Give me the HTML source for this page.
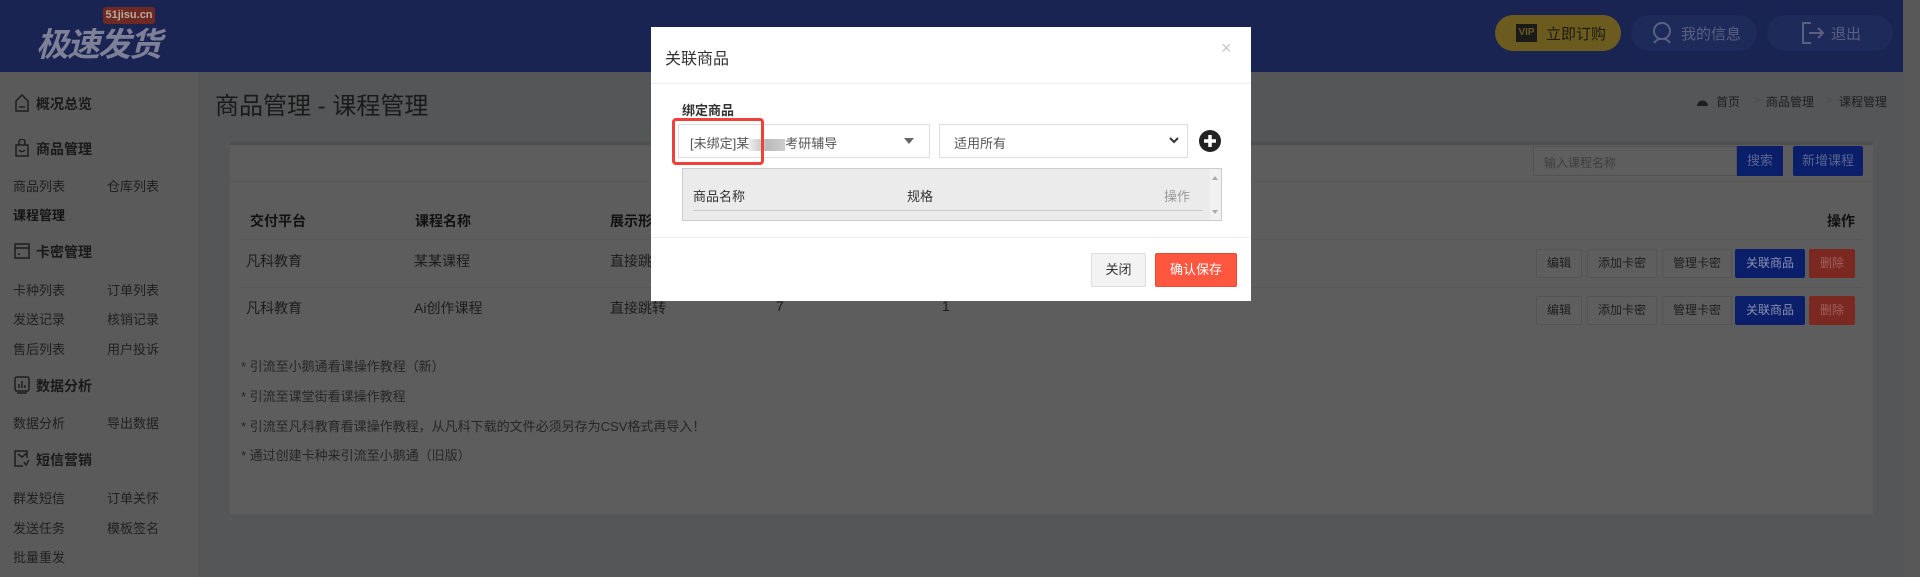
<!DOCTYPE html>
<html><head><meta charset="utf-8"><style>
*{margin:0;padding:0;box-sizing:border-box}
body{width:1920px;height:577px;overflow:hidden;background:#555657;font-family:"Liberation Sans","Noto Sans CJK SC",sans-serif;position:relative;color:#1e1e1e}
.a{position:absolute;white-space:nowrap}
.hdr{left:0;top:0;width:1903px;height:72px;background:#1a2452}
.sb{left:0;top:72px;width:200px;height:505px;background:#5a5a5a;border-right:1px solid #505050}
.sbi{font-size:13px;color:#202020}
.sbh{font-size:14px;font-weight:bold;color:#1a1a1a}
.panel{left:230px;top:142px;width:1643px;height:372px;background:#5d5d5d;border-top:3px solid #4f4f4f}
.th{font-size:14px;font-weight:bold;color:#111}
.td{font-size:14px;color:#1c1c1c}
.btn{height:29px;line-height:27px;font-size:12px;text-align:center;border:1px solid #545454;border-radius:2px;background:#5e5e5e;color:#1e1e1e}
.bb{background:#0a1e6a;border-color:#0a1e6a;color:#8a90b0}
.br{background:#7a2820;border-color:#7a2820;color:#a06060}
.note{font-size:13px;color:#262626}
.modal{left:651px;top:27px;width:600px;height:274px;background:#fff}
.bc{font-size:12px;color:#1e1e1e;top:93px}
</style></head><body>
<div class="a hdr"></div>
<div class="a" style="left:1903px;top:0;width:17px;height:577px;background:#575757"></div>
<div class="a" style="left:103px;top:7px;width:52px;height:17px;background:#6e2a22;border-radius:3px;color:#b8a8a0;font-size:11px;font-weight:bold;text-align:center;line-height:17px">51jisu.cn</div>
<div class="a" style="left:36px;top:18px;font-size:33px;font-weight:bold;font-style:italic;color:#7d8096;letter-spacing:-2px">极速发货</div>
<div class="a" style="left:1495px;top:15px;width:126px;height:36px;border-radius:18px;background:#6b5b1f"></div>
<div class="a" style="left:1516px;top:24px;width:21px;height:18px;background:#1a1a1a;color:#6b5b1f;font-size:10px;font-weight:bold;text-align:center;line-height:18px">VIP</div>
<div class="a" style="left:1546px;top:23px;font-size:15px;color:#1d1a10">立即订购</div>
<div class="a" style="left:1631px;top:15px;width:126px;height:36px;border-radius:18px;background:#1d2a5a"></div>
<svg class="a" style="left:1651px;top:21px" width="22" height="24" viewBox="0 0 22 24"><circle cx="11" cy="10" r="8" fill="none" stroke="#5a6080" stroke-width="2"/><path d="M3 22 Q6 18 9 18 M19 22 Q16 18 13 18" fill="none" stroke="#5a6080" stroke-width="2"/></svg>
<div class="a" style="left:1681px;top:23px;font-size:15px;color:#5a6080">我的信息</div>
<div class="a" style="left:1767px;top:15px;width:126px;height:36px;border-radius:18px;background:#1d2a5a"></div>
<svg class="a" style="left:1801px;top:21px" width="24" height="24" viewBox="0 0 24 24"><path d="M10 2H2v20h8M8 12h14M17 7l5 5-5 5" fill="none" stroke="#5a6080" stroke-width="2"/></svg>
<div class="a" style="left:1831px;top:23px;font-size:15px;color:#5a6080">退出</div>

<div class="a sb"></div>
<svg class="a" style="left:14px;top:94px" width="16" height="18"><path d="M2 7L8 1l6 6v10H2z" fill="none" stroke="#1e1e1e" stroke-width="1.5"/><path d="M5 13h6" stroke="#1e1e1e" stroke-width="1.5"/></svg>
<div class="a sbh" style="left:36px;top:94px">概况总览</div>
<svg class="a" style="left:14px;top:139px" width="16" height="18"><path d="M2 6h12v11H2zM5 6V3a3 3 0 016 0v3M5 11q3 3 6 0" fill="none" stroke="#1e1e1e" stroke-width="1.5"/></svg>
<div class="a sbh" style="left:36px;top:139px">商品管理</div>
<div class="a sbi" style="left:13px;top:176px">商品列表</div><div class="a sbi" style="left:107px;top:176px">仓库列表</div>
<div class="a sbi" style="left:13px;top:205px;font-weight:bold;color:#141414">课程管理</div>
<svg class="a" style="left:14px;top:242px" width="16" height="18"><rect x="1" y="2" width="14" height="14" fill="none" stroke="#1e1e1e" stroke-width="1.5"/><path d="M1 6h14M4 12h2" stroke="#1e1e1e" stroke-width="1.5"/></svg>
<div class="a sbh" style="left:36px;top:242px">卡密管理</div>
<div class="a sbi" style="left:13px;top:280px">卡种列表</div><div class="a sbi" style="left:107px;top:280px">订单列表</div>
<div class="a sbi" style="left:13px;top:309px">发送记录</div><div class="a sbi" style="left:107px;top:309px">核销记录</div>
<div class="a sbi" style="left:13px;top:339px">售后列表</div><div class="a sbi" style="left:107px;top:339px">用户投诉</div>
<svg class="a" style="left:14px;top:376px" width="16" height="18"><rect x="1" y="1" width="14" height="14" rx="2" fill="none" stroke="#1e1e1e" stroke-width="1.5"/><path d="M5 12V8M8 12V5M11 12V9M3 17h10" stroke="#1e1e1e" stroke-width="1.5"/></svg>
<div class="a sbh" style="left:36px;top:376px">数据分析</div>
<div class="a sbi" style="left:13px;top:413px">数据分析</div><div class="a sbi" style="left:107px;top:413px">导出数据</div>
<svg class="a" style="left:14px;top:450px" width="16" height="18"><path d="M13 8V1H1v15h8M4 4l4 3 5-4M10 12l2 3 3-5" fill="none" stroke="#1e1e1e" stroke-width="1.5"/></svg>
<div class="a sbh" style="left:36px;top:450px">短信营销</div>
<div class="a sbi" style="left:13px;top:488px">群发短信</div><div class="a sbi" style="left:107px;top:488px">订单关怀</div>
<div class="a sbi" style="left:13px;top:518px">发送任务</div><div class="a sbi" style="left:107px;top:518px">模板签名</div>
<div class="a sbi" style="left:13px;top:547px">批量重发</div>

<div class="a" style="left:215px;top:86px;font-size:24px;color:#1a1a1a">商品管理 - 课程管理</div>
<svg class="a" style="left:1696px;top:95px" width="13" height="12"><path d="M1 11a5.5 5.5 0 0111 0z" fill="#1e1e1e"/></svg>
<div class="a bc" style="left:1716px">首页</div>
<div class="a bc" style="left:1753px;color:#4a4a4a">&gt;</div>
<div class="a bc" style="left:1766px">商品管理</div>
<div class="a bc" style="left:1826px;color:#4a4a4a">&gt;</div>
<div class="a bc" style="left:1839px">课程管理</div>
<div class="a panel"></div>
<div class="a" style="left:230px;top:181px;width:1643px;height:1px;background:#585858"></div>
<div class="a" style="left:1533px;top:146px;width:204px;height:30px;border:1px solid #525252;background:#5e5e5e;font-size:12px;color:#3e3e3e;padding:7px 10px">输入课程名称</div>
<div class="a" style="left:1737px;top:146px;width:46px;height:30px;background:#0a1e6a;color:#5a6590;font-size:13px;text-align:center;line-height:30px">搜索</div>
<div class="a" style="left:1793px;top:146px;width:70px;height:30px;background:#0a1e6a;color:#5a6590;font-size:13px;text-align:center;line-height:30px;border-radius:2px">新增课程</div>
<div class="a th" style="left:250px;top:211px">交付平台</div>
<div class="a th" style="left:415px;top:211px">课程名称</div>
<div class="a th" style="left:610px;top:211px">展示形式</div>
<div class="a th" style="left:1827px;top:211px">操作</div>
<div class="a" style="left:240px;top:239px;width:1622px;height:1px;background:#575757"></div>
<div class="a" style="left:240px;top:287px;width:1622px;height:1px;background:#575757"></div>
<div class="a td" style="left:246px;top:251px">凡科教育</div><div class="a td" style="left:414px;top:251px">某某课程</div><div class="a td" style="left:610px;top:251px">直接跳转</div>
<div class="a td" style="left:246px;top:298px">凡科教育</div><div class="a td" style="left:414px;top:298px">Ai创作课程</div><div class="a td" style="left:610px;top:298px">直接跳转</div>
<div class="a td" style="left:776px;top:298px">7</div><div class="a td" style="left:942px;top:298px">1</div>
<div class="a btn" style="left:1536px;top:249px;width:46px">编辑</div><div class="a btn" style="left:1587px;top:249px;width:70px">添加卡密</div><div class="a btn" style="left:1662px;top:249px;width:70px">管理卡密</div><div class="a btn bb" style="left:1735px;top:249px;width:70px">关联商品</div><div class="a btn br" style="left:1809px;top:249px;width:46px">删除</div>
<div class="a btn" style="left:1536px;top:296px;width:46px">编辑</div><div class="a btn" style="left:1587px;top:296px;width:70px">添加卡密</div><div class="a btn" style="left:1662px;top:296px;width:70px">管理卡密</div><div class="a btn bb" style="left:1735px;top:296px;width:70px">关联商品</div><div class="a btn br" style="left:1809px;top:296px;width:46px">删除</div>
<div class="a note" style="left:241px;top:356px">* 引流至小鹅通看课操作教程（新）</div>
<div class="a note" style="left:241px;top:386px">* 引流至课堂街看课操作教程</div>
<div class="a note" style="left:241px;top:416px">* 引流至凡科教育看课操作教程，从凡科下载的文件必须另存为CSV格式再导入！</div>
<div class="a note" style="left:241px;top:445px">* 通过创建卡种来引流至小鹅通（旧版）</div>

<div class="a modal"></div>
<div class="a" style="left:665px;top:45px;font-size:16px;color:#333">关联商品</div>
<div class="a" style="left:1221px;top:38px;font-size:18px;color:#c8c8c8">×</div>
<div class="a" style="left:651px;top:83px;width:600px;height:1px;background:#eee"></div>
<div class="a" style="left:682px;top:100px;font-size:13px;font-weight:bold;color:#333">绑定商品</div>
<div class="a" style="left:678px;top:124px;width:252px;height:34px;border:1px solid #ddd;font-size:13px;color:#555;padding:8px 11px">[未绑定]某<span style="display:inline-block;width:36px;height:12px;background:linear-gradient(90deg,#eee,#bbb,#ccc);vertical-align:middle"></span>考研辅导</div>
<div class="a" style="left:904px;top:138px;width:0;height:0;border-left:5px solid transparent;border-right:5px solid transparent;border-top:6px solid #666"></div>
<div class="a" style="left:939px;top:124px;width:249px;height:34px;border:1px solid #ddd;font-size:13px;color:#555;padding:8px 14px">适用所有</div>
<svg class="a" style="left:1168px;top:135px" width="12" height="10"><path d="M2 3l4 4 4-4" fill="none" stroke="#333" stroke-width="2"/></svg>
<svg class="a" style="left:1198px;top:129px" width="24" height="24"><circle cx="12" cy="12" r="11" fill="#222"/><path d="M12 6v12M6 12h12" stroke="#fff" stroke-width="3.5"/></svg>
<div class="a" style="left:672px;top:118px;width:92px;height:47px;border:3px solid #f0403a;border-radius:4px"></div>
<div class="a" style="left:682px;top:168px;width:540px;height:53px;border:1px solid #ccc;background:#ebebeb"></div>
<div class="a" style="left:1210px;top:169px;width:11px;height:51px;background:#f1f1f1"></div>
<div class="a" style="left:1212px;top:176px;border-left:3px solid transparent;border-right:3px solid transparent;border-bottom:4px solid #aaa"></div>
<div class="a" style="left:1212px;top:210px;border-left:3px solid transparent;border-right:3px solid transparent;border-top:4px solid #aaa"></div>
<div class="a" style="left:693px;top:186px;font-size:13px;color:#333">商品名称</div>
<div class="a" style="left:907px;top:186px;font-size:13px;color:#333">规格</div>
<div class="a" style="left:1164px;top:186px;font-size:13px;color:#999">操作</div>
<div class="a" style="left:693px;top:210px;width:510px;height:1px;background:#ccc"></div>
<div class="a" style="left:651px;top:237px;width:600px;height:1px;background:#eee"></div>
<div class="a" style="left:1091px;top:253px;width:55px;height:34px;border:1px solid #ddd;background:#f3f3f3;border-radius:2px;font-size:13px;color:#333;text-align:center;line-height:32px">关闭</div>
<div class="a" style="left:1155px;top:253px;width:82px;height:34px;border:1px solid #e84a36;background:#ff5640;border-radius:2px;font-size:13px;color:#fff;text-align:center;line-height:32px">确认保存</div>
</body></html>
